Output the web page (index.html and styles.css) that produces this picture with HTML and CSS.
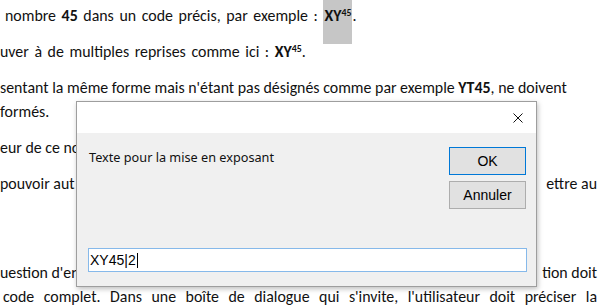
FILE: index.html
```html
<!DOCTYPE html>
<html lang="fr">
<head>
<meta charset="utf-8">
<title>Mise en exposant</title>
<link rel="stylesheet" href="styles.css">
</head>
<body>
<div class="page">
  <div class="doc">
    <p class="para first loose"> nombre <b>45</b> dans un code précis, par exemple : <span class="sel"><b>XY<sup>45</sup></b></span>.</p>
    <p class="para loose">uver à de multiples reprises comme ici : <b>XY<sup>45</sup></b>.</p>
    <p class="para">sentant la même forme mais n'étant pas désignés comme par exemple <b>YT45</b>, ne doivent<br>formés.</p>
    <p class="para">eur de ce nom</p>
    <p class="para split"><span>pouvoir aut</span><span>ettre au</span></p>
    <div class="para last">
      <p class="split"><span>uestion d'er</span><span>tion doit</span></p>
      <p class="just">code complet. Dans une boîte de dialogue qui s'invite, l'utilisateur doit préciser la</p>
    </div>
  </div>

  <div class="dialog">
    <div class="titlebar">
      <svg class="close" width="10" height="10" viewBox="0 0 10 10" aria-hidden="true">
        <path d="M0.5 0.5 L9.5 9.5 M9.5 0.5 L0.5 9.5" stroke="#111" stroke-width="1" fill="none"/>
      </svg>
    </div>
    <div class="dbody">
      <div class="toprow">
        <div class="label">Texte pour la mise en exposant</div>
        <div class="buttons">
          <div class="btn default">OK</div>
          <div class="btn">Annuler</div>
        </div>
      </div>
      <div class="input"><span>XY45|2</span><span class="caret"></span></div>
    </div>
  </div>
</div>
</body>
</html>
```

FILE: styles.css
```css
html, body {
  margin: 0;
  padding: 0;
  background: #ffffff;
}
.page {
  width: 600px;
  height: 305px;
  overflow: hidden;
  position: relative;
}
.doc {
  width: 597px;
  padding-top: 4px;
  font-family: Carlito, Lato, "Liberation Sans", sans-serif;
  font-size: 15.9px;
  color: #111;
}
.para {
  margin: 0 0 12px 0;
  line-height: 24px;
  white-space: nowrap;
}
.para p {
  margin: 0;
}
.first {
  padding-left: 5px;
}
.loose {
  word-spacing: 2px;
}
.split {
  display: flex;
  justify-content: space-between;
}
.last {
  margin-top: 65px;
}
.just {
  padding-left: 3px;
  text-align: justify;
  text-align-last: justify;
}
sup {
  font-size: 0.62em;
  line-height: 0;
  vertical-align: 0.55em;
}
.sel {
  background: #c6c6c6;
  padding: 9px 1px 19px 1px;
}

.dialog {
  position: absolute;
  left: 76px;
  top: 101px;
  width: 461px;
  height: 186px;
  box-sizing: border-box;
  border: 1px solid #9e9e9e;
  background: #f0f0f0;
  box-shadow: 1px 2px 5px rgba(0, 0, 0, 0.25);
  display: flex;
  flex-direction: column;
}
.titlebar {
  height: 31px;
  background: #ffffff;
  display: flex;
  justify-content: flex-end;
  align-items: center;
  padding-right: 13px;
  flex: none;
}
.close {
  display: block;
}
.dbody {
  flex: 1;
  display: flex;
  flex-direction: column;
  padding: 14px 9px 14px 11px;
}
.toprow {
  display: flex;
  justify-content: space-between;
  align-items: flex-start;
}
.label {
  font-family: "Noto Sans", "Open Sans", sans-serif;
  font-size: 12.7px;
  color: #111;
  margin-top: 1px;
  padding-left: 1px;
}
.buttons {
  display: flex;
  flex-direction: column;
  gap: 6px;
  margin-right: 1px;
}
.btn {
  width: 77px;
  height: 28px;
  box-sizing: border-box;
  border: 1px solid #adadad;
  background: #e1e1e1;
  font-family: "Liberation Sans", Arial, sans-serif;
  font-size: 14px;
  color: #000;
  display: flex;
  align-items: center;
  justify-content: center;
}
.btn.default {
  border-color: #0078d7;
}
.input {
  margin-top: auto;
  height: 24px;
  box-sizing: border-box;
  border: 1px solid #86b9ea;
  background: #ffffff;
  font-family: "Liberation Sans", Arial, sans-serif;
  font-size: 14px;
  color: #000;
  display: flex;
  align-items: center;
  padding-left: 1px;
}
.caret {
  width: 1px;
  height: 15px;
  background: #000;
  margin-left: 1px;
}
```
